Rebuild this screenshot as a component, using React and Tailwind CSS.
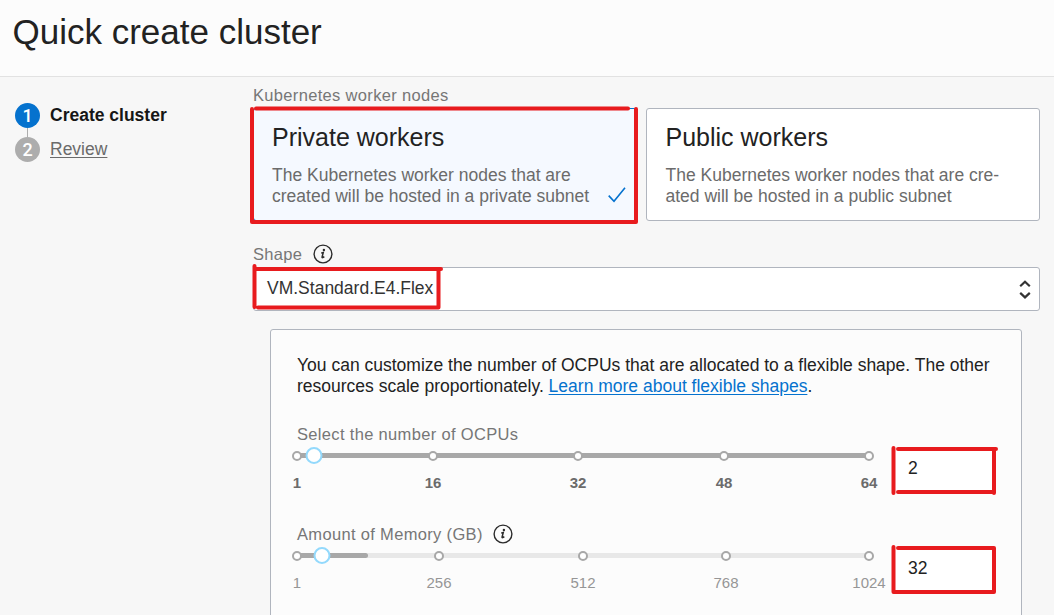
import React from "react";

function InfoIcon() {
  return (
    <svg width="20" height="20" viewBox="0 0 20 20" fill="none" aria-label="Info">
      <circle cx="10" cy="10" r="8.9" stroke="#2b2b2b" strokeWidth="1.4" />
      <circle cx="10.9" cy="5.9" r="1.2" fill="#2b2b2b" />
      <path d="M8.2 9.1 L10.3 8.4 L9 13.3 Q9.1 14.3 11.3 12.6" stroke="#2b2b2b" strokeWidth="1.5" />
    </svg>
  );
}

function FieldLabel({ children, info }) {
  return (
    <div className="flex h-5 items-center whitespace-nowrap text-[16.5px] leading-5 tracking-[0.33px] text-[#767676]">
      <span>{children}</span>
      {info && <span className="ml-[10.5px]"><InfoIcon /></span>}
    </div>
  );
}

function Step({ number, label, active }) {
  return (
    <li className="flex items-center gap-[10px]">
      <span className={`flex h-[25px] w-[25px] items-center justify-center rounded-full font-['Roboto',sans-serif] text-[18px] font-medium leading-[25px] text-white ${active ? "bg-[#0572ce]" : "bg-[#adadad]"}`}>
        {number}
      </span>
      <span className={`text-[17.5px] leading-[21px] ${active ? "font-bold text-[#161616]" : "text-[#6b6b6b] underline underline-offset-2"}`}>{label}</span>
    </li>
  );
}

function WorkerCard({ title, lines, selected }) {
  return (
    <div className={`flex h-[113px] flex-col rounded-[3px] border pt-[13px] ${selected ? "w-[384px] border-[#0572ce] bg-[#f5f9ff] pl-[18px]" : "w-[394px] border-[#b0b5be] bg-white pl-[18.5px]"}`}>
      <h2 className="text-[25px] leading-[30px] text-[#222]">{title}</h2>
      <div className="mt-[13px] flex items-end">
        <p className="w-[334px] whitespace-nowrap text-[17.5px] leading-[21px] text-[#6b6b6b]">
          {lines[0]}<br />{lines[1]}
        </p>
        {selected && (
          <svg className="mb-[4px] ml-[2px]" width="18" height="16" viewBox="0 0 18 16" fill="none">
            <path d="M0.7 8.6 L6 14.3 L17 0.8" stroke="#0572ce" strokeWidth="1.6" />
          </svg>
        )}
      </div>
    </div>
  );
}

function Slider({ label, info, ticks, fill, thumb, value, bold }) {
  return (
    <section className="flex h-[100px]">
      <div className="w-[572px]">
        <FieldLabel info={info}>{label}</FieldLabel>
        <div className="relative mt-[9px] h-[5px] rounded-full bg-[#e8e8e8]">
          <div className="h-[5px] rounded-full bg-[#a8a8a8]" style={{ width: fill }} />
          {ticks.map(([name, x]) => (
            <React.Fragment key={name}>
              <span className="absolute -top-[2px] h-[10px] w-[10px] -translate-x-1/2 rounded-full border-2 border-[#a8a8a8] bg-white" style={{ left: x }} />
              <span className={`absolute top-[21px] -translate-x-1/2 text-[15px] leading-[18px] ${bold ? "font-bold text-[#6b6b6b]" : "text-[#969696]"}`} style={{ left: x }}>{name}</span>
            </React.Fragment>
          ))}
          <span className="absolute -top-[6px] h-[17px] w-[17px] -translate-x-1/2 rounded-full border-2 border-[#93d9fc] bg-white" style={{ left: thumb }} />
        </div>
      </div>
      <div className="ml-6 mt-[25px] h-[44px] w-[102px] bg-white pl-[15px] pt-[9px] text-[17.5px] leading-[21px] text-[#222]">{value}</div>
    </section>
  );
}

function Highlights() {
  return (
    <svg className="pointer-events-none absolute left-0 top-0" width="1054" height="615" fill="none" stroke="#e81b1e" strokeWidth="4" strokeLinecap="round" strokeLinejoin="round">
      <path d="M256 108.5H628M252 109V222M252 222H636V109" />
      <path d="M254.5 266V307M256 269H441M258 307.5H438.5V270" />
      <path d="M893.5 448V493M898 449H996M994 450V493M898 492H994" />
      <path d="M893.5 547V592H994V548M898 548H994" />
    </svg>
  );
}

export default function App() {
  return (
    <div className="relative h-[615px] w-[1054px] overflow-hidden bg-[#f7f7f7] font-['Liberation_Sans',Arial,sans-serif]">
      <header className="h-[77px] border-b border-[#e2e2e2] bg-[#fcfcfc] pl-[12.5px] pt-[12px]">
        <h1 className="text-[35px] leading-10 text-[#222]">Quick create cluster</h1>
      </header>
      <div className="flex">
        <ol className="flex w-[253px] flex-col pl-[15px] pt-[26px]">
          <Step number="1" label="Create cluster" active />
          <li className="ml-[12px] h-[9px] w-px bg-[#adadad]" />
          <Step number="2" label="Review" />
        </ol>
        <main className="w-[787px] pt-[8px]">
          <FieldLabel>Kubernetes worker nodes</FieldLabel>
          <div className="mt-[3px] flex justify-between">
            <WorkerCard title="Private workers" lines={["The Kubernetes worker nodes that are", "created will be hosted in a private subnet"]} selected />
            <WorkerCard title="Public workers" lines={["The Kubernetes worker nodes that are cre-", "ated will be hosted in a public subnet"]} />
          </div>
          <div className="mt-[23px]"><FieldLabel info>Shape</FieldLabel></div>
          <div className="mt-[3px] flex h-[44px] justify-between rounded-[3px] border border-[#b0b5be] bg-white pl-[13px] pr-2 pt-[10px]">
            <span className="text-[17.5px] leading-[21px] text-[#333]">VM.Standard.E4.Flex</span>
            <svg className="mt-[2px]" width="12" height="19" viewBox="0 0 12 19" fill="none" stroke="#333" strokeWidth="2.2">
              <path d="M1.2 6.3 L6 1.8 L10.8 6.3 M1.2 12.9 L6 17.4 L10.8 12.9" />
            </svg>
          </div>
          <div className="ml-[17px] mt-[18px] h-[340px] w-[752px] rounded-[3px] border border-[#b0b5be] bg-[#fcfcfc] pl-[26px] pt-[25px]">
            <p className="whitespace-nowrap text-[17.5px] leading-[21px] text-[#222]">
              You can customize the number of OCPUs that are allocated to a flexible shape. The other<br />
              resources scale proportionately. <a className="text-[#0572ce] underline underline-offset-2">Learn more about flexible shapes</a>.
            </p>
            <div className="mt-[27px]">
              <Slider label="Select the number of OCPUs" bold ticks={[["1", 0], ["16", 136], ["32", 281], ["48", 427], ["64", 572]]} fill={572} thumb={17} value="2" />
              <Slider label="Amount of Memory (GB)" info ticks={[["1", 0], ["256", 142], ["512", 286], ["768", 429], ["1024", 572]]} fill={71} thumb={25} value="32" />
            </div>
          </div>
        </main>
      </div>
      <Highlights />
    </div>
  );
}
